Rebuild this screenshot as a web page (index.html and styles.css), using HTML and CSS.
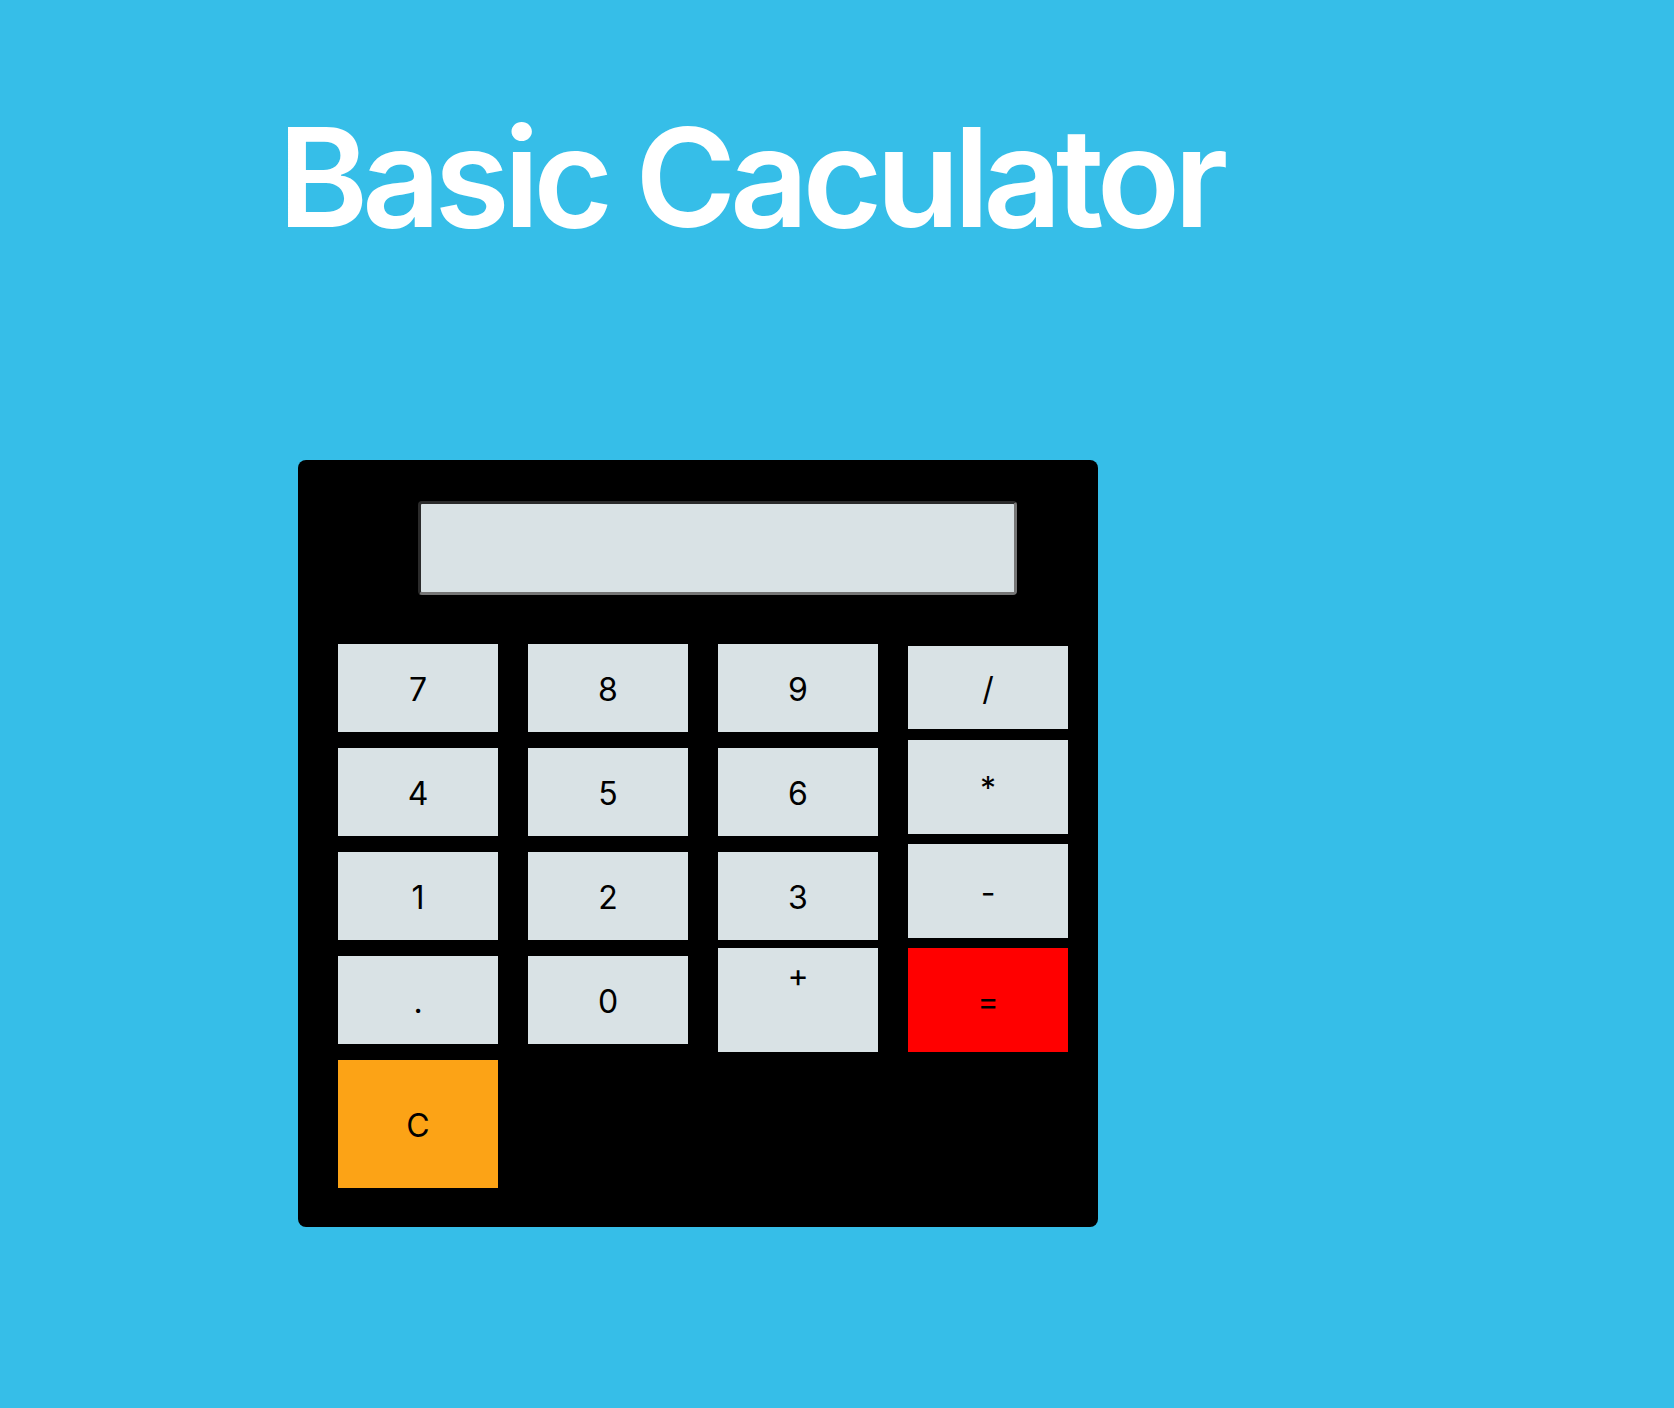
FILE: index.html
```html
<!DOCTYPE html>
<html lang="en">
<head>
<meta charset="utf-8">
<title>Basic Caculator</title>
<link rel="stylesheet" href="styles.css">
</head>
<body>
<h1 class="title">Basic Caculator</h1>
<div class="calc">
  <input class="display" type="text" value="">
  <div class="keys">
    <div class="col">
      <button class="key">7</button>
      <button class="key">4</button>
      <button class="key">1</button>
      <button class="key">.</button>
      <button class="key key-clear">C</button>
    </div>
    <div class="col">
      <button class="key">8</button>
      <button class="key">5</button>
      <button class="key">2</button>
      <button class="key">0</button>
    </div>
    <div class="col">
      <button class="key">9</button>
      <button class="key">6</button>
      <button class="key">3</button>
      <button class="key key-plus">+</button>
    </div>
    <div class="col col-ops">
      <button class="key key-div">/</button>
      <button class="key key-op">*</button>
      <button class="key key-op key-minus">-</button>
      <button class="key key-eq">=</button>
    </div>
  </div>
</div>
</body>
</html>
```
FILE: styles.css
```css
html, body {
  margin: 0;
  padding: 0;
}
body {
  background: #36bee8;
  min-height: 1408px;
  font-family: Inter, "Liberation Sans", sans-serif;
}
.title {
  margin: 0;
  padding: 109px 0 0 278px;
  font-family: Inter, "Liberation Sans", sans-serif;
  font-size: 137px;
  line-height: 137px;
  font-weight: 600;
  color: #ffffff;
  letter-spacing: -6.2px;
  white-space: nowrap;
}
.calc {
  margin: 214px 0 0 298px;
  width: 800px;
  height: 767px;
  box-sizing: border-box;
  padding: 41px 30px 39px 40px;
  background: #000000;
  border-radius: 8px;
}
.display {
  display: block;
  margin: 0 0 0 80px;
  width: 599px;
  height: 94px;
  box-sizing: border-box;
  padding: 0 8px;
  background: #d9e2e5;
  border-style: solid;
  border-width: 3px;
  border-color: #2b2b2b #767676 #767676 #2b2b2b;
  border-radius: 4px;
  font-family: Inter, "Liberation Sans", sans-serif;
  font-size: 32px;
  outline: none;
}
.keys {
  display: flex;
  align-items: flex-start;
  gap: 30px;
  margin-top: 49px;
}
.col {
  display: flex;
  flex-direction: column;
  gap: 16px;
  width: 160px;
}
.key {
  display: flex;
  align-items: center;
  justify-content: center;
  box-sizing: border-box;
  width: 160px;
  height: 88px;
  margin: 0;
  padding: 4px 0 0 0;
  border: none;
  border-radius: 0;
  background: #d9e2e5;
  color: #000000;
  font-family: Inter, "Liberation Sans", sans-serif;
  font-size: 32px;
  font-weight: 400;
  line-height: 1.2;
}
.key-clear {
  height: 128px;
  background: #fca316;
}
.key-plus {
  margin-top: -8px;
  height: 104px;
  align-items: flex-start;
  padding-top: 9px;
}
.col-ops {
  gap: 10px;
}
.key-div {
  margin-top: 2px;
  margin-bottom: 1px;
  height: 83px;
}
.key-op {
  height: 94px;
}
.key-eq {
  height: 104px;
  background: #ff0000;
}
```
